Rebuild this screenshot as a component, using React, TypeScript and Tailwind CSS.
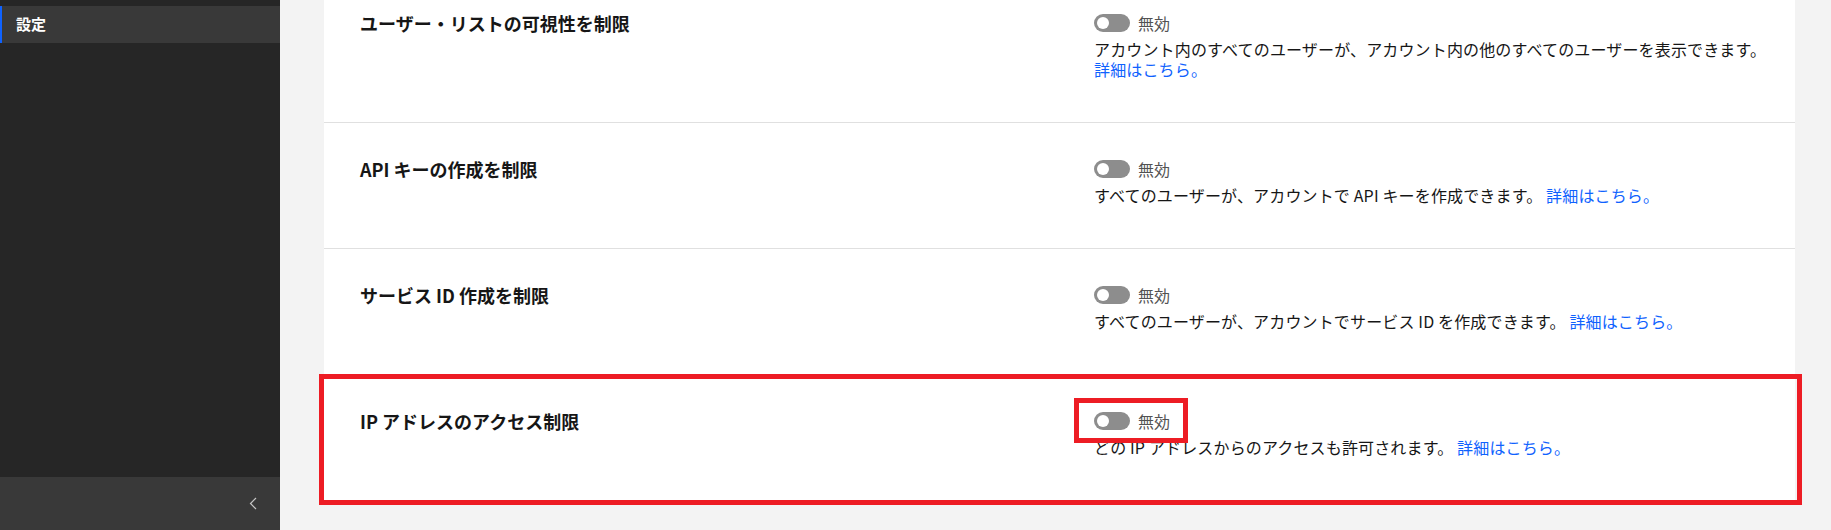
import React from "react";

interface Setting {
  title: string;
  description: string;
  highlighted?: boolean;
}

const settings: Setting[] = [
  {
    title: "ユーザー・リストの可視性を制限",
    description: "アカウント内のすべてのユーザーが、アカウント内の他のすべてのユーザーを表示できます。",
  },
  {
    title: "API キーの作成を制限",
    description: "すべてのユーザーが、アカウントで API キーを作成できます。",
  },
  {
    title: "サービス ID 作成を制限",
    description: "すべてのユーザーが、アカウントでサービス ID を作成できます。",
  },
  {
    title: "IP アドレスのアクセス制限",
    description: "どの IP アドレスからのアクセスも許可されます。",
    highlighted: true,
  },
];

function Toggle() {
  return (
    <div className="relative h-[18px] w-[36px] rounded-full bg-[#8d8d8d] flex-shrink-0">
      <div className="absolute left-[3px] top-[3px] h-[12px] w-[12px] rounded-full bg-white" />
    </div>
  );
}

function SettingRow({ setting, last }: { setting: Setting; last: boolean }) {
  return (
    <div className={`relative flex pl-[36px] pt-[34px] pb-[43px] ${last ? "" : "border-b border-[#e0e0e0]"}`}>
      <div className="w-[734px] flex-shrink-0 text-[18px] leading-[24px] font-bold text-[#161616]">
        {setting.title}
      </div>
      <div className="flex-1 pr-4">
        <div className="relative flex h-6 items-center gap-2">
          <Toggle />
          <span className="text-[16px] text-[#525252]">無効</span>
          {setting.highlighted && (
            <div className="pointer-events-none absolute left-[-20px] top-[-11px] h-[45px] w-[114px] border-[5px] border-[#ed1c24]" />
          )}
        </div>
        <p className="mt-1 text-[16px] leading-[20px] tracking-[0.15px] text-[#161616]">
          {setting.description}{" "}
          <a href="#" className="whitespace-nowrap text-[#0f62fe]">
            詳細はこちら。
          </a>
        </p>
      </div>
      {setting.highlighted && (
        <div className="pointer-events-none absolute left-[-5px] right-[-7px] top-[-1px] bottom-[-5px] border-[5px] border-[#ed1c24]" />
      )}
    </div>
  );
}

export default function App() {
  return (
    <div
      className="flex h-[530px] w-[1831px] overflow-hidden bg-[#f3f3f3]"
      style={{ fontFamily: '"Noto Sans CJK JP", "Noto Sans", sans-serif' }}
    >
      <aside className="flex h-full w-[280px] flex-shrink-0 flex-col bg-[#262626]">
        <div className="mt-[6px] flex h-[37px] items-center border-l-2 border-[#0f62fe] bg-[#393939] pl-[14px]">
          <span className="text-[15px] font-bold text-white">設定</span>
        </div>
        <div className="flex-1" />
        <div className="flex h-[53px] items-center justify-end bg-[#393939] pr-[23px]">
          <svg width="8" height="13" viewBox="0 0 8 13" fill="none">
            <polyline points="7,1 1.5,6.5 7,12" stroke="#c6c6c6" strokeWidth="1.2" />
          </svg>
        </div>
      </aside>
      <main className="flex-1 overflow-hidden pl-[44px] pr-[36px]">
        <div className="-mt-[23px] bg-white">
          {settings.map((s, i) => (
            <SettingRow key={s.title} setting={s} last={i === settings.length - 1} />
          ))}
        </div>
      </main>
    </div>
  );
}
